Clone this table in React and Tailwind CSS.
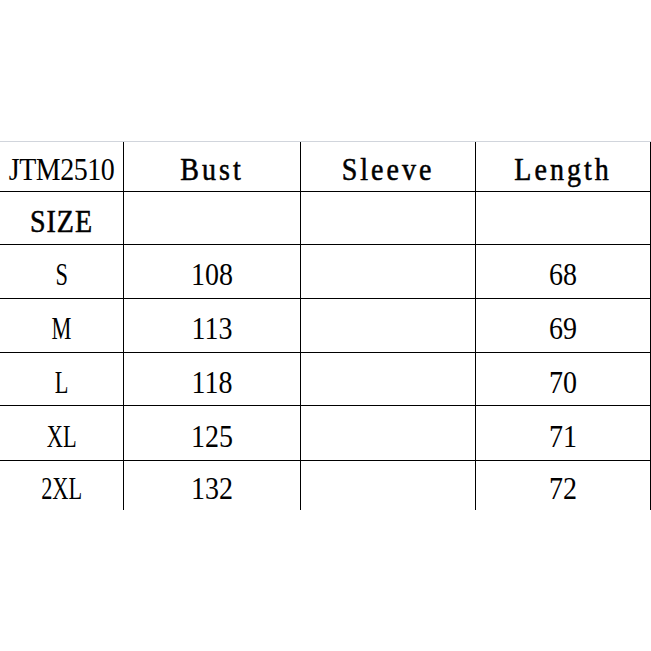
import React from 'react';

const rows = [
  { size: 'S', bust: '108', sleeve: '', length: '68', h: 'h-[54px]' },
  { size: 'M', bust: '113', sleeve: '', length: '69', h: 'h-[54px]' },
  { size: 'L', bust: '118', sleeve: '', length: '70', h: 'h-[53px]' },
  { size: 'XL', bust: '125', sleeve: '', length: '71', h: 'h-[55px]' },
  { size: '2XL', bust: '132', sleeve: '', length: '72', h: 'h-[49px]', last: true },
];

const serif = { fontFamily: '"Liberation Serif", "Times New Roman", serif' };

const HeadCell = ({ children, h, track = '', heavy }) => (
  <div className={`flex items-center justify-center border-r border-b border-black pt-[7px] ${h}`}>
    <span
      style={serif}
      className={`inline-block text-[28px] leading-none text-black scale-y-110 ${track} ${heavy ? '[-webkit-text-stroke:0.5px_black]' : ''}`}
    >
      {children}
    </span>
  </div>
);

const BodyCell = ({ children, h, last, narrow }) => (
  <div className={`flex items-center justify-center border-r border-black pt-[7px] ${last ? '' : 'border-b'} ${h}`}>
    <span
      style={serif}
      className={`inline-block text-[28px] leading-none text-black scale-y-110 ${narrow ? 'scale-x-80' : ''}`}
    >
      {children}
    </span>
  </div>
);

export default function App() {
  return (
    <div className="w-[651px] h-[651px] bg-white overflow-hidden pt-[141px]">
      <div className="h-px w-full bg-gray-300" />
      <div className="grid grid-cols-[124px_177px_175px_175px]">
        <HeadCell h="h-[50px]" track="tracking-[-0.5px]">JTM2510</HeadCell>
        <HeadCell h="h-[50px]" track="tracking-[3px]" heavy>Bust</HeadCell>
        <HeadCell h="h-[50px]" track="tracking-[3px]" heavy>Sleeve</HeadCell>
        <HeadCell h="h-[50px]" track="tracking-[3px]" heavy>Length</HeadCell>

        <HeadCell h="h-[53px]" track="tracking-[1px]" heavy>SIZE</HeadCell>
        <HeadCell h="h-[53px]"></HeadCell>
        <HeadCell h="h-[53px]"></HeadCell>
        <HeadCell h="h-[53px]"></HeadCell>

        {rows.map((r) => (
          <React.Fragment key={r.size}>
            <BodyCell h={r.h} last={r.last} narrow>{r.size}</BodyCell>
            <BodyCell h={r.h} last={r.last}>{r.bust}</BodyCell>
            <BodyCell h={r.h} last={r.last}>{r.sleeve}</BodyCell>
            <BodyCell h={r.h} last={r.last}>{r.length}</BodyCell>
          </React.Fragment>
        ))}
      </div>
    </div>
  );
}
